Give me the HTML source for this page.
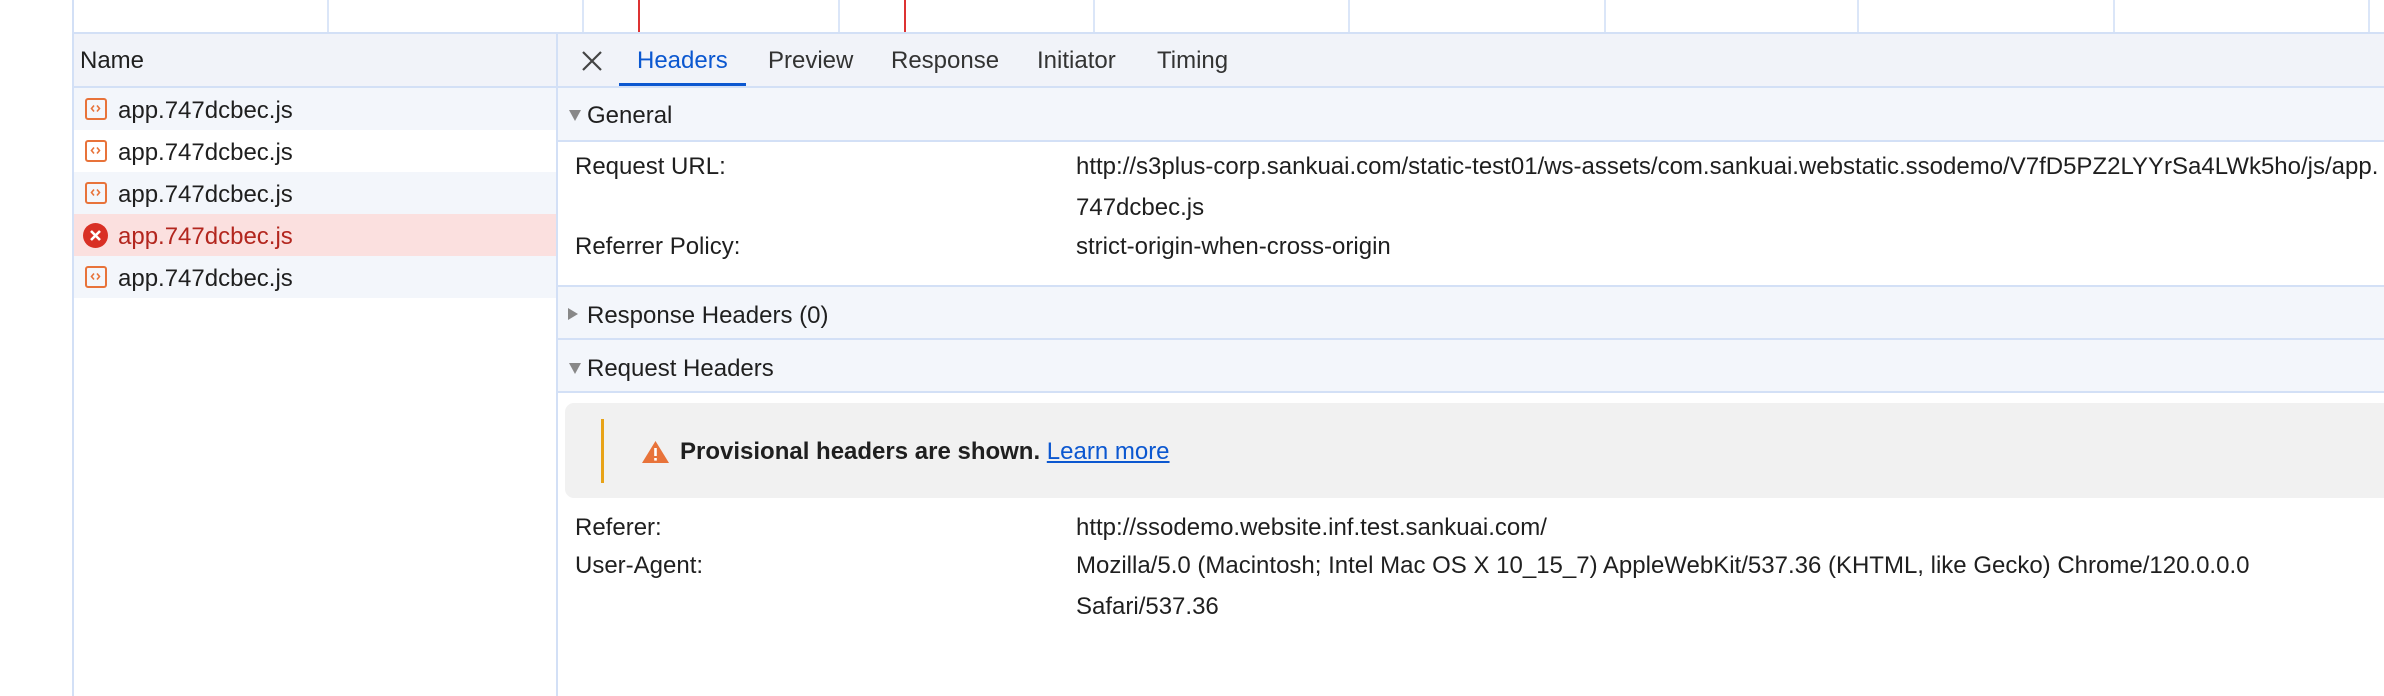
<!DOCTYPE html>
<html><head><meta charset="utf-8"><style>
*{margin:0;padding:0;box-sizing:border-box}
body{width:2384px;height:696px;background:#fff;position:relative;overflow:hidden;font-family:"Liberation Sans",Arial,sans-serif;font-size:24px;color:#1f1f1f}
.a{position:absolute;white-space:nowrap}
.vl{position:absolute;top:0;height:33px;width:2px;background:#dbe6f8}
.hl{position:absolute;height:2px;background:#d3e0f6}
.row{position:absolute;left:74px;width:482px;height:42px}
.fi{position:absolute;left:11px;top:10px;width:22px;height:22px;border:2.5px solid #e8733a;border-radius:3px}
.rt{position:absolute;left:44px;top:9px}
.tri{position:absolute;width:0;height:0;border-left:6px solid transparent;border-right:6px solid transparent;border-top:11px solid #888}
.trr{position:absolute;width:0;height:0;border-top:6px solid transparent;border-bottom:6px solid transparent;border-left:10px solid #888}
</style></head><body>
<div class="a" style="left:72px;top:0;width:2px;height:696px;background:#d3e0f6"></div>
<div class="vl" style="left:327px"></div><div class="vl" style="left:582px"></div><div class="vl" style="left:838px"></div><div class="vl" style="left:1093px"></div><div class="vl" style="left:1348px"></div><div class="vl" style="left:1604px"></div><div class="vl" style="left:1857px"></div><div class="vl" style="left:2113px"></div><div class="vl" style="left:2368px"></div>
<div class="a" style="left:638px;top:0;width:2px;height:33px;background:#d33"></div>
<div class="a" style="left:904px;top:0;width:2px;height:33px;background:#d33"></div>
<div class="hl" style="left:72px;top:32px;width:2312px"></div>
<div class="a" style="left:74px;top:34px;width:2310px;height:52px;background:#f1f3f9"></div>
<div class="hl" style="left:74px;top:86px;width:2310px"></div>
<div class="a" style="left:80px;top:47px">Name</div>
<div class="a" style="left:556px;top:34px;width:2px;height:662px;background:#d3e0f6"></div>
<svg class="a" style="left:581px;top:50px" width="22" height="22" viewBox="0 0 22 22"><path d="M2 2L20 20M20 2L2 20" stroke="#444" stroke-width="2.2"/></svg>
<div class="a" style="left:637px;top:47px;color:#0b57d0">Headers</div>
<div class="a" style="left:619px;top:83px;width:127px;height:3px;background:#0b57d0"></div>
<div class="a" style="left:768px;top:47px;color:#333">Preview</div>
<div class="a" style="left:891px;top:47px;color:#333">Response</div>
<div class="a" style="left:1037px;top:47px;color:#333">Initiator</div>
<div class="a" style="left:1157px;top:47px;color:#333">Timing</div>
<div class="row" style="top:88px;background:#f3f6fb"><div class="fi"><svg style="position:absolute;left:2px;top:2px" width="13" height="13" viewBox="0 0 13 13"><path d="M5 3.5L2.5 6.5L5 9.5M8 3.5L10.5 6.5L8 9.5" fill="none" stroke="#e8733a" stroke-width="1.6"/></svg></div><div class="rt">app.747dcbec.js</div></div>
<div class="row" style="top:130px;background:#fff"><div class="fi"><svg style="position:absolute;left:2px;top:2px" width="13" height="13" viewBox="0 0 13 13"><path d="M5 3.5L2.5 6.5L5 9.5M8 3.5L10.5 6.5L8 9.5" fill="none" stroke="#e8733a" stroke-width="1.6"/></svg></div><div class="rt">app.747dcbec.js</div></div>
<div class="row" style="top:172px;background:#f3f6fb"><div class="fi"><svg style="position:absolute;left:2px;top:2px" width="13" height="13" viewBox="0 0 13 13"><path d="M5 3.5L2.5 6.5L5 9.5M8 3.5L10.5 6.5L8 9.5" fill="none" stroke="#e8733a" stroke-width="1.6"/></svg></div><div class="rt">app.747dcbec.js</div></div>
<div class="row" style="top:214px;background:#fbe0df"><svg style="position:absolute;left:9px;top:9px" width="25" height="25" viewBox="0 0 25 25"><circle cx="12.5" cy="12.5" r="12.5" fill="#d93025"/><path d="M8 8L17 17M17 8L8 17" stroke="#fff" stroke-width="2.6"/></svg><div class="rt" style="color:#b3261e">app.747dcbec.js</div></div>
<div class="row" style="top:256px;background:#f3f6fb"><div class="fi"><svg style="position:absolute;left:2px;top:2px" width="13" height="13" viewBox="0 0 13 13"><path d="M5 3.5L2.5 6.5L5 9.5M8 3.5L10.5 6.5L8 9.5" fill="none" stroke="#e8733a" stroke-width="1.6"/></svg></div><div class="rt">app.747dcbec.js</div></div>
<div class="a" style="left:558px;top:88px;width:1826px;height:52px;background:#f3f6fb"></div>
<div class="hl" style="left:558px;top:140px;width:1826px"></div>
<div class="tri" style="left:569px;top:110px"></div>
<div class="a" style="left:587px;top:102px">General</div>
<div class="a" style="left:575px;top:153px">Request URL:</div>
<div class="a" style="left:1076px;top:153px">http://s3plus-corp.sankuai.com/static-test01/ws-assets/com.sankuai.webstatic.ssodemo/V7fD5PZ2LYYrSa4LWk5ho/js/app.</div>
<div class="a" style="left:1076px;top:194px">747dcbec.js</div>
<div class="a" style="left:575px;top:233px">Referrer Policy:</div>
<div class="a" style="left:1076px;top:233px">strict-origin-when-cross-origin</div>
<div class="hl" style="left:558px;top:285px;width:1826px"></div>
<div class="a" style="left:558px;top:287px;width:1826px;height:51px;background:#f3f6fb"></div>
<div class="hl" style="left:558px;top:338px;width:1826px"></div>
<div class="trr" style="left:568px;top:308px"></div>
<div class="a" style="left:587px;top:302px">Response Headers (0)</div>
<div class="a" style="left:558px;top:340px;width:1826px;height:51px;background:#f3f6fb"></div>
<div class="hl" style="left:558px;top:391px;width:1826px"></div>
<div class="tri" style="left:569px;top:363px"></div>
<div class="a" style="left:587px;top:355px">Request Headers</div>
<div class="a" style="left:565px;top:403px;width:1830px;height:95px;background:#f1f1f1;border-radius:9px"></div>
<div class="a" style="left:601px;top:419px;width:3px;height:64px;background:#e8a317"></div>
<svg class="a" style="left:641px;top:440px" width="29" height="24" viewBox="0 0 29 24"><path d="M14.5 1 L28 23 L1 23 Z" fill="#e8733a"/><rect x="13.2" y="8" width="2.6" height="8" fill="#fff"/><rect x="13.2" y="18" width="2.6" height="2.6" fill="#fff"/></svg>
<div class="a" style="left:680px;top:438px;font-weight:bold">Provisional headers are shown. <span style="font-weight:normal;color:#0b57d0;text-decoration:underline">Learn more</span></div>
<div class="a" style="left:575px;top:514px">Referer:</div>
<div class="a" style="left:1076px;top:514px">http://ssodemo.website.inf.test.sankuai.com/</div>
<div class="a" style="left:575px;top:552px">User-Agent:</div>
<div class="a" style="left:1076px;top:552px">Mozilla/5.0 (Macintosh; Intel Mac OS X 10_15_7) AppleWebKit/537.36 (KHTML, like Gecko) Chrome/120.0.0.0</div>
<div class="a" style="left:1076px;top:593px">Safari/537.36</div>
</body></html>
